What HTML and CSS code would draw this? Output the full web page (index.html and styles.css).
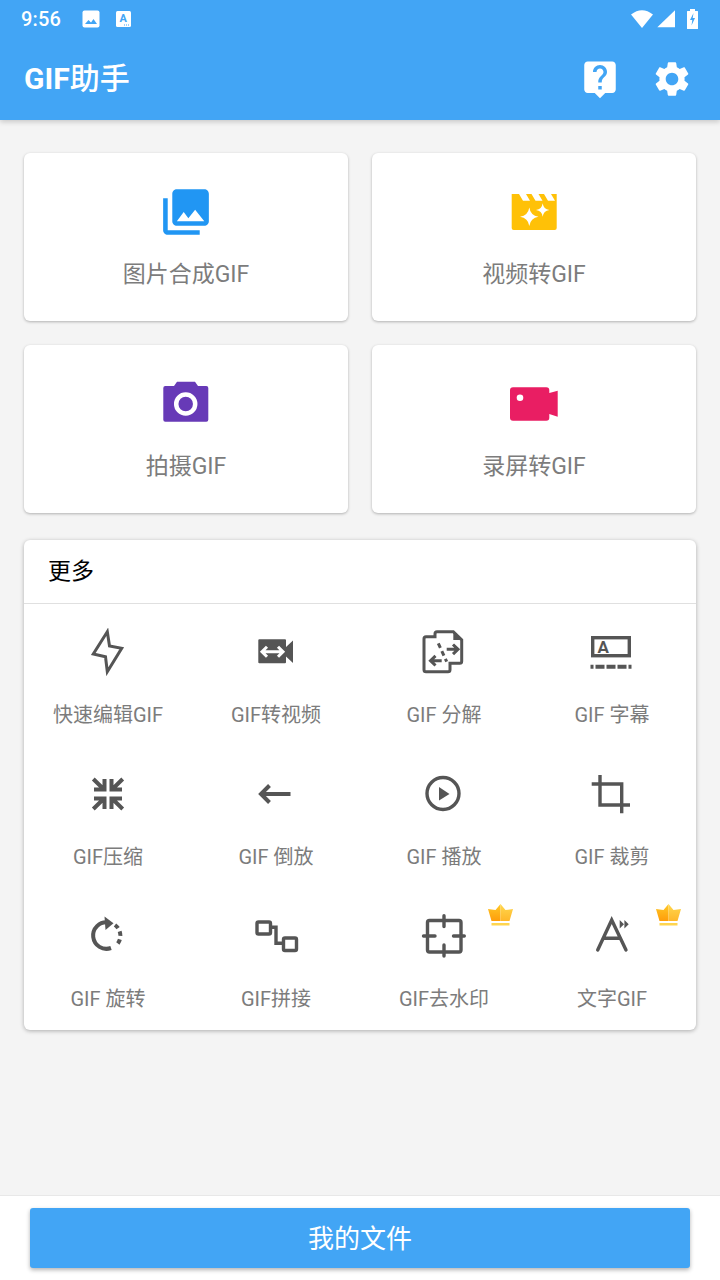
FILE: index.html
```html
<!DOCTYPE html>
<html lang="zh-CN">
<head>
<meta charset="utf-8">
<title>GIF助手</title>
<link rel="stylesheet" href="styles.css">
</head>
<body>
<div class="page">
  <header class="top">
    <div class="status">
      <span class="time">9:56</span>
      <svg class="st-pic" viewBox="0 0 18 18"><rect x="0.5" y="0.5" width="17" height="17" rx="2" fill="#fff"/><path d="M3 14l3.5-4 2.5 2.5 2.5-3.500 3.500 5z" fill="#42a5f5"/></svg>
      <svg class="st-a" viewBox="0 0 16 16"><rect width="15" height="16" rx="1.500" fill="#fff"/><text x="7.200" y="10.500" class="st-a-text">A</text><path d="M8 14h1M10 14h1M12 14h1" stroke="#42a5f5" stroke-width="1.200"/></svg>
      <span class="spacer"></span>
      <svg class="st-wifi" viewBox="0 0 24 20"><path d="M1 5.500Q12-3 23 5.500L12 19Z" fill="#fff"/></svg>
      <svg class="st-signal" viewBox="0 0 18 18"><path d="M0.300 17.300H18V0.300Z" fill="#fff"/></svg>
      <svg class="st-batt" viewBox="0 0 11 20"><path d="M3 0h5v2h2.500q.5 0 .5 .5V19.500q0 .5-.5 .5H.5q-.5 0-.5-.5V2.500Q0 2 .5 2H3Z" fill="#fff"/><path d="M6.500 4L3 11h2.300L4.500 16.500 8 9H5.700Z" fill="#42a5f5"/></svg>
    </div>
    <div class="appbar">
      <h1 class="title"><span class="title-latin">GIF</span>助手</h1>
      <span class="spacer"></span>
      <svg class="bar-icon help" viewBox="0 0 24 24"><path fill="#fff" d="M19 2H5c-1.110 0-2 .9-2 2v14c0 1.100.89 2 2 2h4l3 3 3-3h4c1.100 0 2-.9 2-2V4c0-1.100-.9-2-2-2zm-6 16h-2v-2h2v2zm2.070-7.750l-.9.92C13.450 11.900 13 12.500 13 14h-2v-.5c0-1.100.45-2.100 1.170-2.830l1.240-1.260c.37-.36.59-.86.59-1.410 0-1.100-.9-2-2-2s-2 .9-2 2H8c0-2.210 1.790-4 4-4s4 1.790 4 4c0 .88-.36 1.680-.93 2.250z"/></svg>
      <svg class="bar-icon gear" viewBox="0 0 24 24"><path fill="#fff" d="M19.140 12.940c.04-.3.06-.61.06-.94 0-.32-.02-.64-.07-.94l2.030-1.580c.18-.14.23-.41.12-.61l-1.920-3.320c-.12-.22-.37-.29-.59-.22l-2.390.96c-.5-.38-1.030-.7-1.620-.94l-.36-2.540c-.04-.24-.24-.41-.48-.41h-3.840c-.24 0-.43.17-.47.41l-.36 2.540c-.59.24-1.130.57-1.620.94l-2.390-.96c-.22-.08-.47 0-.59.22L2.740 8.870c-.12.21-.08.47.12.61l2.030 1.580c-.05.3-.09.63-.09.94s.02.64.07.94l-2.030 1.580c-.18.14-.23.41-.12.61l1.920 3.320c.12.22.37.29.59.22l2.390-.96c.5.38 1.030.7 1.620.94l.36 2.540c.05.24.24.41.48.41h3.840c.24 0 .44-.17.47-.41l.36-2.540c.59-.24 1.130-.56 1.620-.94l2.390.96c.22.08.47 0 .59-.22l1.920-3.320c.12-.22.07-.47-.12-.61l-2.010-1.580zM12 15.600c-1.980 0-3.600-1.620-3.600-3.600s1.620-3.600 3.600-3.600 3.600 1.620 3.600 3.600-1.620 3.600-3.600 3.600z"/></svg>
    </div>
  </header>

  <main class="main">
    <section class="tiles">
      <div class="tile">
        <svg class="tile-icon" viewBox="-0.250 -0.250 24.500 24.500"><path fill="#2196f3" d="M22 16V4c0-1.100-.9-2-2-2H8c-1.100 0-2 .9-2 2v12c0 1.100.9 2 2 2h12c1.100 0 2-.9 2-2zm-11-4l2.030 2.710L16 11l4 5H8l3-4zM2 6v14c0 1.100.9 2 2 2h14v-2H4V6H2z"/></svg>
        <span class="tile-label">图片合成GIF</span>
      </div>
      <div class="tile">
        <svg class="tile-icon" viewBox="0 0 56 56"><path fill="#ffc107" d="M5.700 10H50.700V44q0 2-2 2H7.700q-2 0-2-2Z"/><path fill="#fff" d="M13 10h7l4 6.700h-7ZM25.500 10h7l4 6.700h-7ZM38 10h7l4 6.700h-7Z"/><path fill="#fff" d="M23.300 23.500Q24.500 31.500 32.500 32.700 24.500 33.900 23.300 41.900 22.100 33.900 14.100 32.700 22.100 31.500 23.300 23.500ZM36.700 19.300Q37.500 25.200 43.400 26 37.500 26.800 36.700 32.700 35.900 26.800 30 26 35.900 25.200 36.700 19.300Z"/></svg>
        <span class="tile-label">视频转GIF</span>
      </div>
      <div class="tile">
        <svg class="tile-icon" viewBox="0 0 56 56"><path fill="#673ab7" d="M19 5.700H37L40 10H48.300q2 0 2 2V43.700q0 2-2 2H7.300q-2 0-2-2V12q0-2 2-2H16Z"/><circle cx="27.700" cy="28" r="9.500" fill="none" stroke="#fff" stroke-width="4.500"/></svg>
        <span class="tile-label">拍摄GIF</span>
      </div>
      <div class="tile">
        <svg class="tile-icon" viewBox="0 0 56 56"><path fill="#e91e63" d="M7 11.300H40.300q3 0 3 3V17L51.700 14.700V40.700L43.300 38V41.700q0 3-3 3H7q-3 0-3-3V14.300q0-3 3-3Z"/><circle cx="14" cy="21.700" r="3.300" fill="#fff"/></svg>
        <span class="tile-label">录屏转GIF</span>
      </div>
    </section>

    <section class="more">
      <div class="more-head">更多</div>
      <div class="grid">
        <div class="item">
          <svg class="item-icon" viewBox="0 0 48 48"><path class="ln" d="M23.300 3.700L9.300 26 21.500 28.700 23.300 43.700 37.700 20.300 25.500 18Z"/></svg>
          <span class="item-label">快速编辑GIF</span>
        </div>
        <div class="item">
          <svg class="item-icon" viewBox="0 0 48 48"><path class="fl" d="M7.300 11.300H33q1 0 1 1V19L41 12.500V35L34 28.500V34.300q0 1-1 1H7.300q-1 0-1-1V12.300q0-1 1-1Z"/><path d="M11 23.700H30M15 18.700L10 23.700 15 28.700M26 18.700L31 23.700 26 28.700" fill="none" stroke="#fff" stroke-width="3"/></svg>
          <span class="item-label">GIF转视频</span>
        </div>
        <div class="item">
          <svg class="item-icon" viewBox="0 0 48 48"><path class="ln" d="M15 8.700V5.700q0-2 2-2H33.300L41.700 12V33.300q0 2-2 2H30V41.700q0 2-2 2H6q-2 0-2-2V10.700q0-2 2-2Z"/><path class="ln" d="M26.700 21.300H38M33 16.500L38 21.300 33 26.100M21.700 32.700H10.500M15.500 27.900L10.500 32.700 15.500 37.500"/><path class="ln" stroke-dasharray="5 3.500" d="M18.300 15.300L26.700 33.700"/><path class="fl" d="M33.300 3.700L41.700 12H33.300Z"/></svg>
          <span class="item-label">GIF 分解</span>
        </div>
        <div class="item">
          <svg class="item-icon" viewBox="0 0 48 48"><rect class="ln3" x="4.700" y="9.700" width="36.600" height="18"/><text x="9.500" y="24.700" class="icon-a">A</text><path class="ln4" stroke-dasharray="3 2 9 2 9 2 9 2 3 10" d="M2.500 38.700H44"/></svg>
          <span class="item-label">GIF 字幕</span>
        </div>

        <div class="item">
          <svg class="item-icon" viewBox="0 0 48 48"><path class="ln4" d="M10 19.500H20.500V9M9.300 9L20 19.500M38 19.500H27.500V9M38.700 9L28 19.500M10 28.500H20.500V39M9.300 39L20 28.500M38 28.500H27.500V39M38.700 39L28 28.500"/></svg>
          <span class="item-label">GIF压缩</span>
        </div>
        <div class="item">
          <svg class="item-icon" viewBox="0 0 48 48"><path class="ln4" d="M38.500 24H9.500M17.500 15.500L9 24 17.500 32.500"/></svg>
          <span class="item-label">GIF 倒放</span>
        </div>
        <div class="item">
          <svg class="item-icon" viewBox="0 0 48 48"><circle class="ln3" cx="23" cy="23.500" r="16"/><path class="fl" d="M19 17V30.500L29.500 24Z"/></svg>
          <span class="item-label">GIF 播放</span>
        </div>
        <div class="item">
          <svg class="item-icon" viewBox="0 0 48 48"><path class="ln3" d="M12 5V35H42M3.700 14H33.700V43.300"/></svg>
          <span class="item-label">GIF 裁剪</span>
        </div>

        <div class="item">
          <svg class="item-icon" viewBox="0 0 48 48"><path class="ln4" d="M24 10.300A13.300 13.300 0 1 0 27 36"/><path class="ln4" stroke-dasharray="4.500 3.500" d="M31 13A13.300 13.300 0 0 1 31.500 34"/><path class="fl" d="M20.500 4.500L29.500 11.300 21.500 18Z"/></svg>
          <span class="item-label">GIF 旋转</span>
        </div>
        <div class="item">
          <svg class="item-icon" viewBox="0 0 48 48"><rect class="ln3" x="5" y="10" width="13.500" height="12" rx="1.500"/><rect class="ln3" x="31.500" y="26" width="13" height="12.500" rx="1.500"/><path class="ln3" d="M18.500 15.300H24V31.300H31.500"/></svg>
          <span class="item-label">GIF拼接</span>
        </div>
        <div class="item">
          <svg class="item-icon" viewBox="0 0 48 48"><rect class="ln3" x="7.500" y="8.500" width="33.500" height="31.500" rx="2"/><path class="ln3 cap" d="M24 3.700V14.500M24 33V44M3.500 24H15M33.500 24H44.300"/></svg>
          <span class="item-label">GIF去水印</span>
          <svg class="crown" viewBox="0 0 25 22"><use href="#crown-shape"/></svg>
        </div>
        <div class="item">
          <svg class="item-icon" viewBox="0 0 48 48"><path class="ln3 cap" d="M9.700 38L23.700 8 38 38M15.300 26.300H32"/><path class="fl" d="M31.700 8V16.500L36 12.300ZM36.400 8V16.500L40.700 12.300Z"/></svg>
          <span class="item-label">文字GIF</span>
          <svg class="crown" viewBox="0 0 25 22"><use href="#crown-shape"/></svg>
        </div>
      </div>
    </section>
  </main>

  <footer class="foot">
    <div class="files-btn">我的文件</div>
  </footer>
</div>

<svg class="defs" width="0" height="0">
  <defs>
    <linearGradient id="cl" x1="0" y1="0" x2="0" y2="1"><stop offset="0" stop-color="#ffc928"/><stop offset="1" stop-color="#ff9d0a"/></linearGradient>
    <linearGradient id="cr" x1="0" y1="0" x2="0" y2="1"><stop offset="0" stop-color="#ffd84f"/><stop offset="1" stop-color="#ffb72a"/></linearGradient>
    <g id="crown-shape">
      <path fill="url(#cl)" d="M12.500 0L7.500 6 0 5 3.500 17H12.500Z"/>
      <path fill="url(#cr)" d="M12.500 0L17.500 6 25 5 21.500 17H12.500Z"/>
      <path fill="#ffd54f" d="M3.500 19H21.500V21.500H3.500Z"/>
    </g>
  </defs>
</svg>
</body>
</html>
```

FILE: styles.css
```css
* { box-sizing: border-box; }
html, body { margin: 0; padding: 0; }
body {
  width: 720px;
  height: 1280px;
  overflow: hidden;
  background: #f4f4f4;
  font-family: Roboto, "Noto Sans CJK SC", sans-serif;
}
.page { display: flex; flex-direction: column; height: 1280px; }
.spacer { flex: 1; }
.defs { position: absolute; }

.top {
  background: #42a5f5;
  color: #fff;
  box-shadow: 0 2px 5px rgba(0, 0, 0, .18);
  position: relative;
}
.status {
  display: flex;
  align-items: center;
  height: 37px;
  padding: 0 22px 0 21px;
}
.time { font-size: 20px; font-weight: 500; width: 41px; letter-spacing: .2px; }
.st-pic { width: 18px; height: 18px; margin-left: 20px; }
.st-a { width: 16px; height: 16px; margin-left: 16px; }
.st-a-text { font: 700 11px Roboto, sans-serif; fill: #42a5f5; text-anchor: middle; }
.st-wifi { width: 24px; height: 20px; margin-right: 3px; }
.st-signal { width: 18px; height: 18px; margin-right: 12px; }
.st-batt { width: 11px; height: 20px; }

.appbar {
  display: flex;
  align-items: center;
  height: 83px;
  padding: 0 27px 0 24px;
}
.title { margin: 0; font-size: 30px; font-weight: 500; line-height: 82px; }
.title-latin { font-weight: 700; }
.bar-icon { width: 42px; height: 42px; display: block; }
.help { margin-right: 30px; }

.main { flex: 1; padding: 33px 24px 0; }
.tiles {
  display: grid;
  grid-template-columns: 1fr 1fr;
  grid-auto-rows: 168px;
  gap: 24px;
}
.tile {
  background: #fff;
  border-radius: 6px;
  box-shadow: 0 1px 3px rgba(0, 0, 0, .28);
  display: flex;
  flex-direction: column;
  align-items: center;
  padding-top: 31px;
}
.tile-icon { width: 56px; height: 56px; display: block; }
.tile-label {
  margin-top: 20px;
  font-size: 23px;
  line-height: 30px;
  color: #7c7c7c;
}

.more {
  margin-top: 27px;
  background: #fff;
  border-radius: 6px;
  box-shadow: 0 1px 4px rgba(0, 0, 0, .3);
}
.more-head {
  height: 64px;
  padding-left: 24px;
  font-size: 23px;
  line-height: 64px;
  color: #000;
  border-bottom: 1px solid #e0e0e0;
}
.grid { display: grid; grid-template-columns: repeat(4, 1fr); }
.item {
  position: relative;
  height: 142px;
  padding-top: 24px;
  display: flex;
  flex-direction: column;
  align-items: center;
}
.item-icon { width: 48px; height: 48px; display: block; }
.item-label {
  margin-top: 25px;
  font-size: 20px;
  line-height: 28px;
  color: #7c7c7c;
  white-space: nowrap;
}
.ln, .ln3, .ln4 { fill: none; stroke: #555; }
.ln { stroke-width: 3; }
.ln3 { stroke-width: 3.400; }
.ln4 { stroke-width: 4; }
.cap { stroke-linecap: round; }
.fl { fill: #555; }
.icon-a { font: 700 17px Roboto, sans-serif; fill: #555; }

.crown {
  position: absolute;
  left: 128px;
  top: 16px;
  width: 25px;
  height: 22px;
}

.foot {
  height: 85px;
  background: #fff;
  border-top: 1px solid #e8e8e8;
  padding: 12px 30px 0;
}
.files-btn {
  height: 60px;
  background: #42a5f5;
  border-radius: 3px;
  box-shadow: 0 2px 4px rgba(0, 0, 0, .3);
  color: #fff;
  font-size: 26px;
  line-height: 62px;
  text-align: center;
}
```
